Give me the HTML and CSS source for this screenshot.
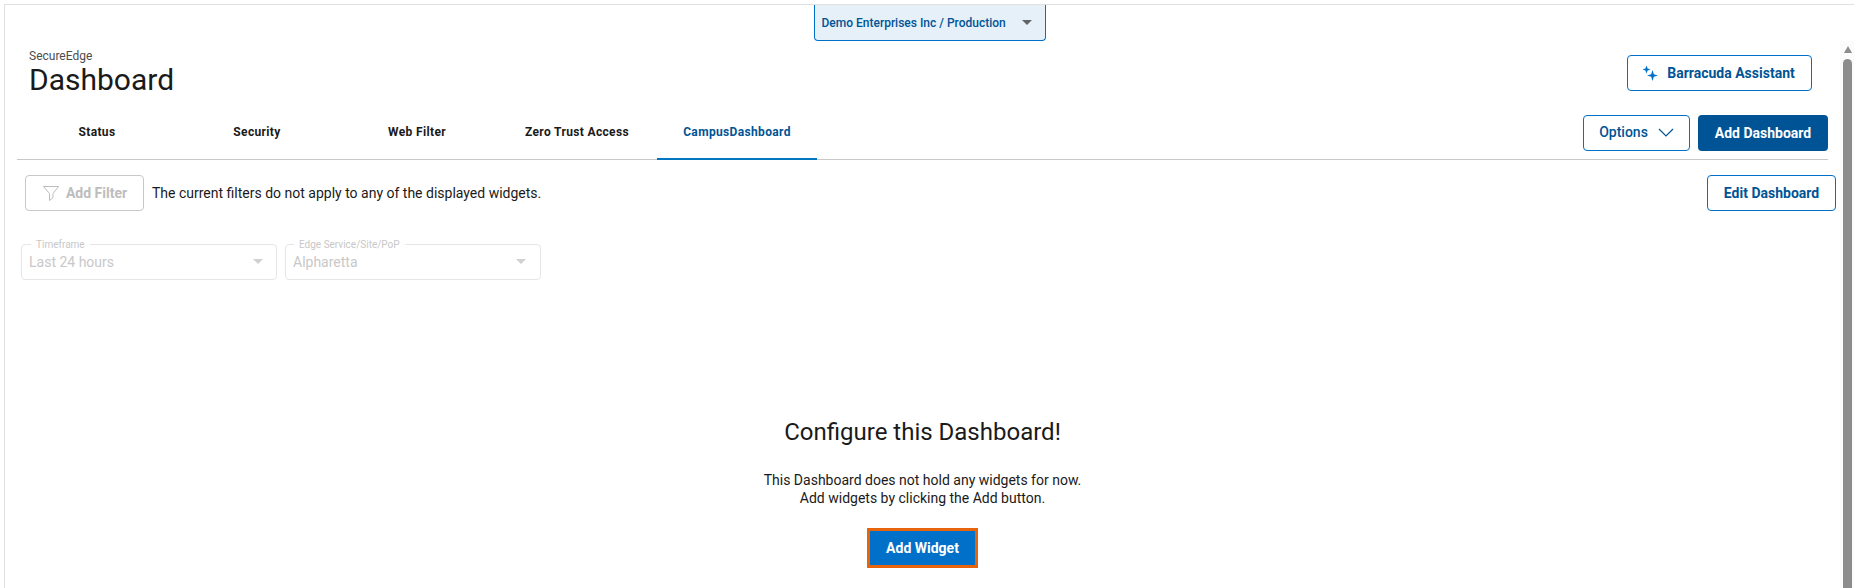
FILE: index.html
```html
<!DOCTYPE html>
<html lang="en">
<head>
    <meta charset="UTF-8">
    <meta name="viewport" content="width=device-width, initial-scale=1.0">
    <title>Dashboard</title>
    <link rel="stylesheet" href="styles.css">
</head>
<body>
    <div class="frame">
        <div class="page">
            <div class="account-bar">
                <div class="account-select">
                    <span>Demo Enterprises Inc / Production</span>
                    <span class="caret caret-dark"></span>
                </div>
            </div>

            <div class="title-row">
                <div>
                    <div class="crumb">SecureEdge</div>
                    <h1 class="page-title">Dashboard</h1>
                </div>
                <button class="btn btn-outline btn-assistant">
                    <svg class="sparkle" width="16" height="16" viewBox="0 0 16 16">
                        <path d="M4.500 0.500 5.600 3.400 8.500 4.500 5.600 5.600 4.500 8.500 3.400 5.600 0.500 4.500 3.400 3.400Z" fill="#0070c9"/>
                        <path d="M10.500 5 11.800 9.200 16 10.500 11.800 11.800 10.500 16 9.200 11.800 5 10.500 9.200 9.200Z" fill="#0070c9"/>
                    </svg>
                    Barracuda Assistant
                </button>
            </div>

            <div class="tab-row">
                <div class="tabs">
                    <div class="tab">Status</div>
                    <div class="tab">Security</div>
                    <div class="tab">Web Filter</div>
                    <div class="tab">Zero Trust Access</div>
                    <div class="tab tab-active">CampusDashboard</div>
                </div>
                <div class="tab-actions">
                    <button class="btn btn-outline btn-options">
                        Options
                        <svg width="16" height="9" viewBox="0 0 16 9"><path d="M1 1 8 8 15 1" fill="none" stroke="#005495" stroke-width="1.2"/></svg>
                    </button>
                    <button class="btn btn-solid btn-add-dash">Add Dashboard</button>
                </div>
            </div>

            <div class="filter-row">
                <button class="btn btn-disabled">
                    <svg width="18" height="18" viewBox="0 0 18 18"><path d="M1.500 2.500H16.500L11 9.500V13.500L7.500 16.500V9.500Z" fill="none" stroke="#bdbdbd" stroke-width="1"/></svg>
                    Add Filter
                </button>
                <span class="filter-note">The current filters do not apply to any of the displayed widgets.</span>
                <button class="btn btn-outline btn-edit">Edit Dashboard</button>
            </div>

            <div class="select-row">
                <div class="field field-time">
                    <span class="field-label">Timeframe</span>
                    <span>Last 24 hours</span>
                    <span class="caret"></span>
                </div>
                <div class="field field-site">
                    <span class="field-label">Edge Service/Site/PoP</span>
                    <span>Alpharetta</span>
                    <span class="caret"></span>
                </div>
            </div>

            <div class="empty">
                <h2 class="empty-title">Configure this Dashboard!</h2>
                <p class="empty-text">This Dashboard does not hold any widgets for now.<br>Add widgets by clicking the Add button.</p>
                <button class="btn-widget">Add Widget</button>
            </div>
        </div>

        <div class="scrollbar">
            <div class="scroll-up"></div>
            <div class="scroll-thumb"></div>
        </div>
    </div>
</body>
</html>
```

FILE: styles.css
```css
* {
    margin: 0;
    padding: 0;
    box-sizing: border-box;
}

html, body {
    width: 100%;
    height: 100%;
    overflow: hidden;
}

body {
    font-family: Roboto, sans-serif;
    background-color: #ffffff;
    color: #1a1a1a;
    padding: 4px 0 0 4px;
}

.frame {
    display: flex;
    height: 100%;
    border-top: 1px solid #e0e0e0;
    border-left: 1px solid #e0e0e0;
}

.page {
    flex: 1;
    min-width: 0;
    padding: 0 12px 0 12px;
}

.account-bar {
    display: flex;
    justify-content: center;
    height: 36px;
}

.account-select {
    width: 232px;
    height: 36px;
    margin-left: 14px;
    padding: 0 13px 0 7px;
    display: flex;
    align-items: center;
    justify-content: space-between;
    background: #e5f0f9;
    border: 1px solid #0070c9;
    border-top: none;
    border-radius: 0 0 4px 4px;
    color: #005495;
    font-size: 12px;
    font-weight: 500;
}

.caret {
    width: 0;
    height: 0;
    border-left: 5px solid transparent;
    border-right: 5px solid transparent;
    border-top: 5px solid #d0d0d0;
}

.caret-dark {
    border-top-color: #646464;
}

.title-row {
    display: flex;
    justify-content: space-between;
    align-items: flex-start;
    height: 74px;
    padding: 8px 16px 0 12px;
}

.crumb {
    font-size: 12px;
    line-height: 14px;
    color: #4d4d4d;
}

.page-title {
    font-size: 30px;
    font-weight: 400;
    line-height: 34px;
    color: #1a1a1a;
}

.btn {
    height: 36px;
    border-radius: 4px;
    font-family: Roboto, sans-serif;
    font-size: 14px;
    font-weight: 700;
    display: inline-flex;
    align-items: center;
    justify-content: center;
    background: #ffffff;
    cursor: pointer;
}

.btn-outline {
    border: 1px solid #0070c9;
    color: #005495;
}

.btn-solid {
    border: none;
    background: #005495;
    color: #ffffff;
}

.btn-disabled {
    width: 119px;
    border: 1px solid #c8c8c8;
    color: #bdbdbd;
    gap: 6px;
}

.btn-assistant {
    width: 185px;
    margin-top: 6px;
    gap: 9px;
    padding-right: 2px;
}

.tab-row {
    display: flex;
    justify-content: space-between;
    height: 45px;
    border-bottom: 1px solid #c8c8c8;
}

.tabs {
    display: flex;
}

.tab {
    width: 160px;
    height: 45px;
    padding-bottom: 12px;
    display: flex;
    align-items: center;
    justify-content: center;
    font-size: 12px;
    font-weight: 700;
    letter-spacing: 0.35px;
    color: #1a1a1a;
}

.tab-active {
    padding-bottom: 10px;
    color: #005495;
    border-bottom: 2px solid #0075c0;
}

.tab-actions {
    display: flex;
    gap: 8px;
}

.btn-options {
    width: 107px;
    padding-bottom: 2px;
    gap: 10px;
    font-weight: 500;
}

.btn-add-dash {
    width: 130px;
}

.filter-row {
    display: flex;
    align-items: center;
    padding: 15px 0 0 8px;
    margin-right: -8px;
}

.filter-note {
    flex: 1;
    margin-left: 8px;
    font-size: 14px;
}

.btn-edit {
    width: 129px;
}

.select-row {
    display: flex;
    gap: 8px;
    padding: 33px 0 0 4px;
}

.field {
    position: relative;
    height: 36px;
    padding: 0 14px 1px 7px;
    display: flex;
    align-items: center;
    justify-content: space-between;
    border: 1px solid #e6e6e6;
    border-radius: 4px;
    font-size: 14px;
    color: #c8c8c8;
}

.field-time {
    width: 256px;
    padding-right: 13px;
}

.field-site {
    width: 256px;
}

.field-label {
    position: absolute;
    top: -6px;
    left: 9px;
    padding: 0 5px;
    background: #ffffff;
    font-size: 10px;
    line-height: 11px;
}

.field-site .field-label {
    left: 8px;
}

.empty {
    display: flex;
    flex-direction: column;
    align-items: center;
    padding-top: 136px;
}

.empty-title {
    font-size: 24px;
    font-weight: 400;
    line-height: 32px;
}

.empty-text {
    margin-top: 23px;
    font-size: 14px;
    line-height: 18px;
    text-align: center;
}

.btn-widget {
    width: 111px;
    height: 40px;
    margin-top: 21px;
    border: 3px solid #e8640c;
    background: #0070c9;
    color: #ffffff;
    font-family: Roboto, sans-serif;
    font-size: 14px;
    font-weight: 700;
    cursor: pointer;
}

.scrollbar {
    width: 14px;
    flex: none;
    margin-top: 36px;
    padding: 5px 2px 0 3px;
    background: #fbfbfb;
    display: flex;
    flex-direction: column;
    align-items: center;
}

.scroll-up {
    flex: none;
    width: 0;
    height: 0;
    border-left: 4.5px solid transparent;
    border-right: 4.5px solid transparent;
    border-bottom: 7px solid #8c8c8c;
}

.scroll-thumb {
    width: 9px;
    flex: 1;
    margin-top: 6px;
    border-radius: 4.5px 4.5px 0 0;
    background: #8c8c8c;
}
```
